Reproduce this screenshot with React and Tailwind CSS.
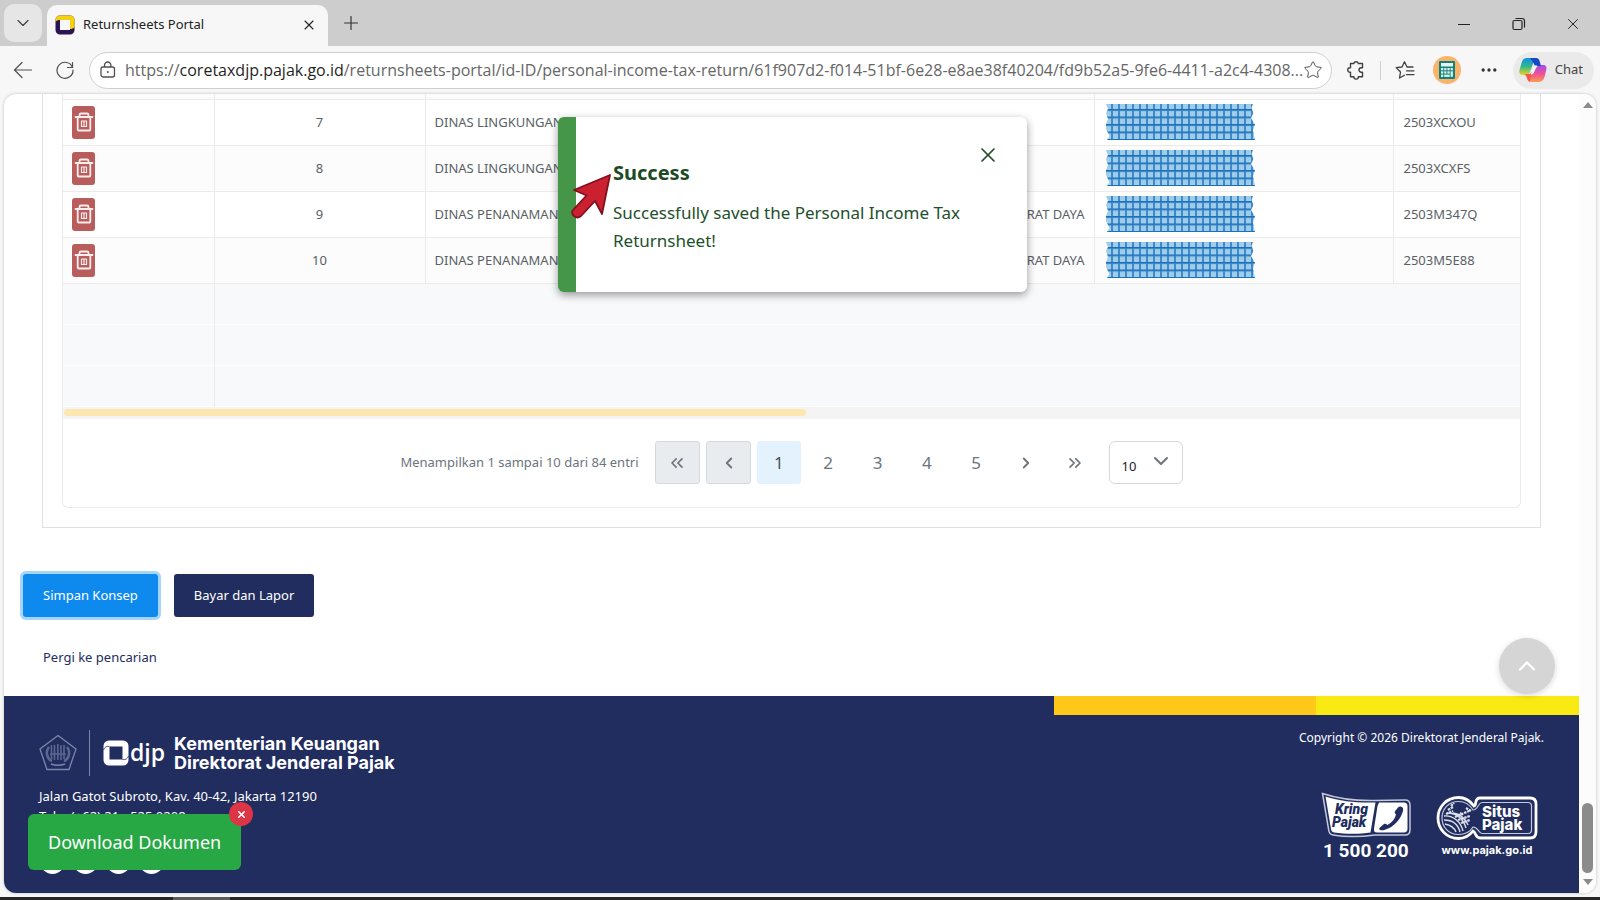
import React from 'react';
import { ChevronDown, ChevronLeft, ChevronRight, ChevronsLeft, ChevronsRight, ChevronUp, Ellipsis, Plus, Star, X } from 'lucide-react';

const ROWS = [
  { no: 7, name: 'DINAS LINGKUNGAN', region: '', doc: '2503XCXOU' },
  { no: 8, name: 'DINAS LINGKUNGAN', region: '', doc: '2503XCXFS' },
  { no: 9, name: 'DINAS PENANAMAN', region: 'BARAT DAYA', doc: '2503M347Q' },
  { no: 10, name: 'DINAS PENANAMAN', region: 'BARAT DAYA', doc: '2503M5E88' },
];

const EMPTY_ROWS = [1, 2, 3];

const PAGES = [2, 3, 4, 5];

const SOCIALS = ['Facebook', 'Instagram', 'Twitter', 'YouTube'];

function PortalIcon() {
  return (
    <svg width="20" height="20" viewBox="0 0 20 20" className="shrink-0">
      <path d="M5 .5h10A4.500 4.500 0 0 1 19.500 5v10a4.500 4.500 0 0 1-4.500 4.500H5A4.500 4.500 0 0 1 .5 15V5A4.500 4.500 0 0 1 5 .5zM5 5v10h10V5z" fill="#2a1452" fillRule="evenodd" />
      <path d="M.5 7V5A4.500 4.500 0 0 1 5 .5h10A4.500 4.500 0 0 1 19.500 5v7c-1 1.500-2.500 2-4.500 2V5H5C3 5 1.500 5.500.5 7z" fill="#f6d112" />
    </svg>
  );
}

function LockIcon() {
  return (
    <svg width="18" height="18" viewBox="0 0 18 18" fill="none" stroke="#505050" strokeWidth="1.3" className="shrink-0">
      <rect x="2" y="6" width="13.5" height="10" rx="2" />
      <path d="M5.5 6V4.2a3.2 3.2 0 0 1 6.4 0V6" />
      <circle cx="8.8" cy="11" r="1" fill="#505050" stroke="none" />
    </svg>
  );
}

function ReloadIcon() {
  return (
    <svg width="20" height="20" viewBox="0 0 20 20" fill="none" stroke="#505050" strokeWidth="1.2" strokeLinecap="round">
      <path d="M17.500 7.500A8 8 0 1 0 18 10" />
      <path d="M17.500 2.500v5h-5" />
    </svg>
  );
}

function BackIcon() {
  return (
    <svg width="20" height="20" viewBox="0 0 20 20" fill="none" stroke="#505050" strokeWidth="1.2" strokeLinecap="round">
      <path d="M1.5 10h17M9 2.5 1.5 10 9 17.5" />
    </svg>
  );
}

function PuzzleIcon() {
  return (
    <svg width="20" height="20" viewBox="0 0 20 20" fill="none" stroke="#404040" strokeWidth="1.4" strokeLinejoin="round">
      <path d="M4.500 3.500h3.300a2.300 2.300 0 0 1 4.500 0h4.200v4.300h-1.300a2.200 2.200 0 0 0 0 4.400h1.300v4.600h-4.100a2.300 2.300 0 0 1-4.600 0H4.500v-4.500H4a2.300 2.300 0 0 1 0-4.600h.5z" />
    </svg>
  );
}

function FavoritesIcon() {
  return (
    <svg width="20" height="20" viewBox="0 0 20 20" fill="none" stroke="#404040" strokeWidth="1.3" strokeLinecap="round" strokeLinejoin="round">
      <path d="M18 7h-6L9.5 1.8 7 7 1.2 7.6 5.5 12l-1 6L9.5 15.2" />
      <path d="M11.5 10.8H19M11.5 14.6H19" />
    </svg>
  );
}

function CopilotIcon() {
  return (
    <svg width="28" height="26" viewBox="0 0 28 26">
      <defs>
        <linearGradient id="cpLeft" x1="0" y1="0" x2="0" y2="1">
          <stop offset="0" stopColor="#1390e8" />
          <stop offset="0.5" stopColor="#2fb98c" />
          <stop offset="1" stopColor="#f3d21b" />
        </linearGradient>
        <linearGradient id="cpRight" x1="0" y1="0" x2="0" y2="1">
          <stop offset="0" stopColor="#9a4ff0" />
          <stop offset="0.5" stopColor="#ee4f9b" />
          <stop offset="1" stopColor="#fd9b4f" />
        </linearGradient>
      </defs>
      <path d="M20 8h4c3 0 4 2 3.200 5l-1.700 7c-1 3.500-3 5-6 5h-6c-4 0-5-2-6-5z" fill="url(#cpRight)" />
      <path d="M8 1h8l-5 14c-1 2.500-2 3-4 3H4c-3 0-4.500-2-3.500-5l2-7c1-3.500 2.500-5 5.500-5z" fill="url(#cpLeft)" />
      <path d="M11 1h6c2 0 3 1 3.600 3L22 9h-4c-2 0-3-1-3.500-3z" fill="#1747c2" />
      <path d="M7 17h6l-2.500 8C8.500 24 8.300 17.500 5 18z" fill="#f2584a" />
      <path d="M14.500 10c1-1.500 2-1.500 3.500-1.500l-3 7c-.6 1.500-1.500 2-3.500 2z" fill="#f4f4f4" />
    </svg>
  );
}

function CalculatorIcon() {
  return (
    <svg width="28" height="28" viewBox="0 0 28 28">
      <circle cx="14" cy="14" r="14" fill="#fbb36c" />
      <rect x="6" y="5" width="16" height="18" rx="1" fill="#12837a" />
      <rect x="8" y="7" width="12" height="3.500" fill="#e8f4f2" />
      <g fill="#d9f0ec">
        <rect x="8" y="12" width="2.300" height="2.300" />
        <rect x="11.200" y="12" width="2.300" height="2.300" />
        <rect x="14.400" y="12" width="2.300" height="2.300" />
        <rect x="17.600" y="12" width="2.300" height="2.300" />
        <rect x="8" y="15.300" width="2.300" height="2.300" />
        <rect x="11.200" y="15.300" width="2.300" height="2.300" />
        <rect x="14.400" y="15.300" width="2.300" height="2.300" />
        <rect x="17.600" y="15.300" width="2.300" height="5.500" />
        <rect x="8" y="18.600" width="2.300" height="2.300" />
        <rect x="11.200" y="18.600" width="5.500" height="2.300" />
      </g>
    </svg>
  );
}

function TrashIcon() {
  return (
    <svg width="20" height="20" viewBox="0 0 20 20" fill="none" stroke="#fbeeee" strokeWidth="1.800" strokeLinecap="round" strokeLinejoin="round">
      <path d="M1.500 5h17M3.700 5v12.500a1 1 0 0 0 1 1h10.600a1 1 0 0 0 1-1V5M5.500 5V3A1.500 1.500 0 0 1 7 1.500h6A1.500 1.500 0 0 1 14.500 3v2" />
      <path d="M7.500 9v5.500h5V9zM10 9v5.500" strokeWidth="1.200" />
    </svg>
  );
}

// Strip of patterned tape that hides the tax number
function Tape({ id }) {
  return (
    <svg width="150" height="36" viewBox="0 0 150 36" className="block">
      <defs>
        <pattern id={id} width="7" height="7.500" patternUnits="userSpaceOnUse" x="6" y="5">
          <rect width="7" height="7.500" fill="#9dcde9" />
          <rect width="2" height="7.500" fill="#3f8aca" />
          <rect width="7" height="2" fill="#3a86c8" />
          <rect y="0" width="7" height="1" fill="#1c6dba" />
        </pattern>
      </defs>
      <path
        d="M1 0h147l-1.500 4 2 5-2.500 5 4 6.500-2 6L150 36H2l2.500-4L1 25l0-5 2-5L1 9l2-4z"
        fill={`url(#${id})`}
      />
    </svg>
  );
}

function EmblemLogo() {
  return (
    <svg width="38" height="37" viewBox="0 0 38 37" fill="none" stroke="#7d86aa" strokeWidth="1.300">
      <path d="M19 1.500 37 15l-7 20.500H8L1 15z" />
      <path d="M10 13c-4 5-2 12 3 14M28 13c4 5 2 12-3 14" strokeWidth="2.500" stroke="#5c668f" />
      <path d="M12.500 11v14M15.500 11v15M18.800 10v16M22 11v15M25 11v14M11 20h16" strokeWidth="1.600" stroke="#5c668f" />
      <path d="M12 30c4 1.500 10 1.500 14 0" strokeWidth="1.500" />
    </svg>
  );
}

function DjpMark() {
  return (
    <svg width="26" height="26" viewBox="0 0 26 26">
      <path
        d="M6 .5h14A5.500 5.500 0 0 1 25.500 6v14a5.500 5.500 0 0 1-5.500 5.500H6A5.500 5.500 0 0 1 .5 20V6A5.500 5.500 0 0 1 6 .5zM6.500 6.500v13h13v-13z"
        fill="#fff"
        fillRule="evenodd"
      />
      <path d="M.5 10c1-3 3-4 6-3.500M25.500 16c-1 3-3 4-6 3.500" fill="none" stroke="#212d5e" strokeWidth="0.800" />
    </svg>
  );
}

function KringPajakLogo() {
  return (
    <svg width="92" height="72" viewBox="0 0 92 72">
      <path d="M1.500 1.500C18 7 34 9 54 8.500l30-.5c3 0 5 2 5 5v25c0 3-2 5-5 5H54c-15 2-30 2-42 0-3-.5-4-2-4.300-5z" fill="#212d5e" stroke="#c3c8da" strokeWidth="1.500" />
      <path d="M4.500 4.500C20 9.500 36 11 54.500 10.500l-5 30c-12 2-26 1.500-36.500 0-2-.4-2.700-1.500-3-3.500z" fill="#fff" />
      <path d="M58 10.500h25c2.200 0 3.500 1.300 3.500 3.500v23c0 2.200-1.300 3.500-3.500 3.500H56c-2.500 0-3.500-1.500-3-4l3.500-22.500z" fill="#fff" />
      <path d="M58.500 37.500c-.8-1 .5-2 1.500-3l3-2.500c1-.6 2-.3 3.500 1 5-3 7.500-6.500 8.500-10.500-1.500-1.500-1.500-2.500-.8-3.500l2.800-3.500c1-1 2.500-1.500 4-.5 1 .8 1.500 2 1 4-2.500 8.500-9 16-18 18.800-2.500.8-4.500.8-5.500-.3z" fill="#212d5e" />
      <text x="14" y="22" fill="#212d5e" fontSize="14" fontWeight="900" fontStyle="italic" fontFamily="Roboto, sans-serif">Kring</text>
      <text x="11" y="35" fill="#212d5e" fontSize="14" fontWeight="900" fontStyle="italic" fontFamily="Roboto, sans-serif">Pajak</text>
      <text x="2" y="65" fill="#fff" fontSize="19" fontWeight="700" fontFamily="Roboto, sans-serif">1 500 200</text>
    </svg>
  );
}

function SitusPajakLogo() {
  return (
    <svg width="102" height="62" viewBox="0 0 102 62" fill="none">
      <path
        d="M38 10C41 9 38 2 44 2h50c4 0 6 2 6 6v28c0 4-2 6-6 6H44c-5 0-4-6-7-7-3 4-8 7.500-14.500 7.500C10.500 42.500 2 33 2 22S10.500 1.500 22.500 1.500C30 1.500 35 6 38 10z"
        stroke="#fff"
        strokeWidth="2.800"
      />
      <path
        d="M37 14c5 0 5-7.500 9-7.500h46c2.500 0 3.500 1 3.500 3.500v24c0 2.500-1 3.500-3.500 3.500H46c-3 0-4-6.500-9-6.500-3 5-8 7.500-14.500 7.500C12.500 38.500 6 31 6 22S12.500 5.500 22.500 5.500C29 5.500 34 9 37 14z"
        stroke="#c3c8da"
        strokeWidth="1.200"
      />
      <path d="M8 20c9-1 17 6 19 15M8 24c8 0 14 4 16 12M9 28c5 1 9 3 11 8M11 17c9 0 16 5 19 15M17 17c7 1 12 5 15 12" stroke="#dde1ee" strokeWidth="1.400" />
      <path d="M19 21l14-6M22 24l12-4M25 27l9-3M12 14l5-3M10 18l7-3M15 10l3-3M24 17l3 2M30 12l5 3" stroke="#dde1ee" strokeWidth="2.200" strokeDasharray="2.500 0.800" />
      <text x="46" y="21" fill="#fff" fontSize="15" fontWeight="800" fontFamily="Inter, sans-serif">Situs</text>
      <text x="46" y="34" fill="#fff" fontSize="15" fontWeight="800" fontFamily="Inter, sans-serif">Pajak</text>
      <text x="51" y="58" fill="#fff" fontSize="11" fontWeight="700" textAnchor="middle" fontFamily="Inter, sans-serif">www.pajak.go.id</text>
    </svg>
  );
}

function BrowserHeader() {
  return (
    <header>
      <div className="flex h-[46px] items-end bg-[#cdcdcd] pl-1">
        <button aria-label="Tab actions" className="mb-1 flex h-[38px] w-[38px] items-center justify-center rounded-[10px] bg-[#e6e6e6]">
          <ChevronDown size={20} strokeWidth={1.4} className="text-[#404040]" />
        </button>
        <div className="ml-[5px] flex h-[41px] w-[281px] items-center rounded-t-[10px] bg-[#f7f7f7] pr-[11px] pb-[2px] pl-2">
          <PortalIcon />
          <span className="ml-2 flex-1 text-[13px] text-[#222]">Returnsheets Portal</span>
          <button aria-label="Close tab">
            <X size={16} strokeWidth={1.6} className="text-[#222]" />
          </button>
        </div>
        <button aria-label="New tab" className="mb-3 ml-3">
          <Plus size={22} strokeWidth={1.3} className="text-[#333]" />
        </button>
        <div className="mb-[13px] ml-auto flex items-center gap-[38px] pr-[18px]">
          <button aria-label="Minimize" className="flex h-4 w-4 items-center">
            <span className="h-px w-3 bg-[#222]" />
          </button>
          <button aria-label="Restore">
            <svg width="14" height="14" viewBox="0 0 14 14" fill="none" stroke="#222" strokeWidth="1.200">
              <rect x="1" y="3.500" width="9" height="9" rx="1.500" />
              <path d="M3.500 1.500h6.500a2.500 2.500 0 0 1 2.500 2.500v6.500" />
            </svg>
          </button>
          <button aria-label="Close">
            <X size={18} strokeWidth={1.3} className="text-[#222]" />
          </button>
        </div>
      </div>

      <div className="flex h-12 items-center bg-[#f7f7f7] pr-[6px] pl-[13px]">
        <button aria-label="Back"><BackIcon /></button>
        <button aria-label="Reload" className="ml-[22px]"><ReloadIcon /></button>
        <div className="ml-[14px] flex h-[37px] min-w-0 flex-1 items-center rounded-full border border-[#cfcfcf] bg-white pr-2 pl-[9px]">
          <LockIcon />
          <span className="ml-2 min-w-0 flex-1 font-['Open_Sans'] text-[16px] whitespace-nowrap text-[#666]">
            https://<span className="text-[#1f1f1f]">coretaxdjp.pajak.go.id</span>
            /returnsheets-portal/id-ID/personal-income-tax-return/61f907d2-f014-51bf-6e28-e8ae38f40204/fd9b52a5-9fe6-4411-a2c4-4308...
          </span>
          <button aria-label="Add to favorites">
            <Star size={20} strokeWidth={1.2} className="text-[#555]" />
          </button>
        </div>
        <button aria-label="Extensions" className="ml-[14px]"><PuzzleIcon /></button>
        <span className="mx-[14px] h-[19px] w-px bg-[#cfcfcf]" />
        <button aria-label="Favorites"><FavoritesIcon /></button>
        <button aria-label="Calculator" className="ml-[18px]"><CalculatorIcon /></button>
        <button aria-label="Settings and more" className="ml-[18px]">
          <Ellipsis size={20} className="text-[#333]" />
        </button>
        <button className="ml-[14px] flex h-[37px] items-center gap-2 rounded-full bg-[#eaeaea] pr-[11px] pl-[6px] text-[13px] text-[#444]">
          <CopilotIcon />
          Chat
        </button>
      </div>
    </header>
  );
}

function ReturnTable() {
  return (
    <table className="w-full table-fixed border-collapse text-[13px] text-[#5a5f66]">
      <colgroup>
        <col className="w-[151px]" />
        <col className="w-[211px]" />
        <col />
        <col className="w-[299px]" />
        <col className="w-[127px]" />
      </colgroup>
      <tbody>
        <tr className="h-[5px] border-b border-[#ebebeb] bg-[#fcfcfc]">
          <td className="border-r border-[#ebebeb] p-0" />
          <td className="border-r border-[#ebebeb] p-0" />
          <td className="border-r border-[#ebebeb] p-0" />
          <td className="border-r border-[#ebebeb] p-0" />
          <td className="p-0" />
        </tr>
        {ROWS.map((row) => (
          <tr key={row.no} className="h-[46px] border-b border-[#ebebeb] even:bg-white odd:bg-[#fcfcfc]">
            <td className="border-r border-[#ebebeb] py-0 pl-[9px]">
              <button aria-label={`Hapus ${row.no}`} className="flex h-[33px] w-[23px] items-center justify-center rounded-[3px] bg-[#b95c5c]">
                <TrashIcon />
              </button>
            </td>
            <td className="border-r border-[#ebebeb] pt-[2px] pb-0 text-center">{row.no}</td>
            <td className="border-r border-[#ebebeb] px-[9px] pt-[2px] pb-0">
              <div className="flex justify-between whitespace-nowrap">
                <span>{row.name}</span>
                <span>{row.region}</span>
              </div>
            </td>
            <td className="border-r border-[#ebebeb] py-0 pl-[10px]"><Tape id={`tape${row.no}`} /></td>
            <td className="pt-[2px] pb-0 pl-[10px]">{row.doc}</td>
          </tr>
        ))}
        {EMPTY_ROWS.map((row) => (
          <tr key={row} className="h-[41px] border-b border-white bg-[#f8f9fb]">
            <td className="border-r border-[#ebebeb] p-0" />
            <td className="p-0" colSpan={4} />
          </tr>
        ))}
      </tbody>
    </table>
  );
}

function Paginator() {
  return (
    <div className="flex h-[88px] items-center justify-center text-[#6c757d]">
      <span className="text-[13px]">Menampilkan 1 sampai 10 dari 84 entri</span>
      <div className="ml-4 flex w-[442px] gap-[6px] text-[17px]">
        <button aria-label="First page" className="flex h-[43px] flex-1 items-center justify-center rounded-[3px] border border-[#d5d9dd] bg-[#e9ecef]">
          <ChevronsLeft size={20} />
        </button>
        <button aria-label="Previous page" className="flex h-[43px] flex-1 items-center justify-center rounded-[3px] border border-[#d5d9dd] bg-[#e9ecef]">
          <ChevronLeft size={18} strokeWidth={2.5} />
        </button>
        <button className="h-[43px] flex-1 rounded-[3px] bg-[#e3f2fd] text-[#495057]">1</button>
        {PAGES.map((page) => (
          <button key={page} className="h-[43px] flex-1">{page}</button>
        ))}
        <button aria-label="Next page" className="flex h-[43px] flex-1 items-center justify-center">
          <ChevronRight size={18} strokeWidth={2.5} />
        </button>
        <button aria-label="Last page" className="flex h-[43px] flex-1 items-center justify-center">
          <ChevronsRight size={20} />
        </button>
      </div>
      <div className="relative ml-3">
        <select aria-label="Rows per page" defaultValue="10" className="h-[43px] w-[74px] appearance-none rounded-[6px] border border-[#d5d9de] bg-white pt-2 pl-3 text-[13px] text-[#222]">
          <option>10</option>
        </select>
        <ChevronDown size={24} strokeWidth={2} className="pointer-events-none absolute top-2 right-[10px]" />
      </div>
    </div>
  );
}

function SuccessDialog() {
  return (
    <div role="alertdialog" aria-labelledby="dialog-title" className="absolute top-[23px] left-[554px] flex w-[469px] rounded-[6px] border-l-[18px] border-[#459648] bg-white pt-[38px] pr-[30px] pb-[37px] pl-[37px] text-[#22502c] shadow-[0_3px_8px_rgba(0,0,0,0.4)]">
      <div className="flex-1">
        <h2 id="dialog-title" className="text-[20px] leading-[36px] font-bold text-[#1b4a25]">Success</h2>
        <p className="mt-[8px] w-[370px] text-[17px] leading-[28px]">
          Successfully saved the Personal Income Tax Returnsheet!
        </p>
      </div>
      <button aria-label="Close message" className="absolute top-[26px] right-[27px]">
        <X size={24} strokeWidth={1.7} />
      </button>
      <svg width="42" height="46" viewBox="0 0 42 46" className="absolute top-[56px] -left-[5px]">
        <path
          d="M39 2 3 17l12.500 5.500L2 37c-3 4 3 10 8 6l14-15 7 13z"
          fill="#cb202f"
          stroke="#80121f"
          strokeWidth="1.800"
          strokeLinejoin="round"
        />
      </svg>
    </div>
  );
}

function Footer() {
  return (
    <footer className="bg-[#212d5e] text-white">
      <div className="flex h-[19px]">
        <div className="w-2/3" />
        <div className="w-1/6 bg-[#ffc91b]" />
        <div className="w-1/6 bg-[#faea14]" />
      </div>
      <div className="flex justify-between px-[35px] pb-[19px]">
        <div className="pt-[15px]">
          <div className="flex items-center">
            <EmblemLogo />
            <span className="ml-3 h-[46px] w-px bg-[#7d86aa]" />
            <div className="ml-[13px] flex items-center">
              <DjpMark />
              <span className="ml-px pb-[2px] font-['Open_Sans'] text-[23px] leading-[26px] font-semibold">djp</span>
            </div>
            <div className="ml-[9px] font-['Inter'] text-[18px] leading-[19px] font-bold">
              Kementerian Keuangan
              <br />
              Direktorat Jenderal Pajak
            </div>
          </div>
          <p className="mt-[10px] text-[13px] leading-[20px]">Jalan Gatot Subroto, Kav. 40-42, Jakarta 12190</p>
          <p className="text-[13px] leading-[20px]">Telp: (+62) 21 - 525 0208</p>
          <div className="mt-[23px] flex gap-2 pl-[1px]">
            {SOCIALS.map((name) => (
              <a key={name} href="#" aria-label={name} className="h-[25px] w-[25px] rounded-full bg-white" />
            ))}
          </div>
        </div>
        <div className="flex flex-col items-end pt-3">
          <p className="text-[12px] leading-[22px]">Copyright © 2026 Direktorat Jenderal Pajak.</p>
          <div className="mt-[43px] flex items-start gap-[23px] pr-[6px]">
            <KringPajakLogo />
            <div className="pt-1"><SitusPajakLogo /></div>
          </div>
        </div>
      </div>
    </footer>
  );
}

export default function App() {
  return (
    <div className="flex min-h-screen flex-col bg-[#f7f7f7] font-['Noto_Sans','Open_Sans',sans-serif]">
      <BrowserHeader />

      <div className="relative mx-1 mb-1 flex flex-1 overflow-hidden rounded-xl bg-white shadow-[0_0_3px_rgba(0,0,0,0.25)]">
        <main className="flex min-w-0 flex-1 flex-col">
          <section className="mx-[38px] border-x border-b border-[#dee2e6] px-[19px] pb-[19px]">
            <div className="rounded-b-[6px] border-x border-b border-[#ebebeb]">
              <ReturnTable />
              <div className="flex h-3 items-center bg-[#f4f4f4] px-px">
                <div className="h-[7px] w-[51%] rounded-full bg-[#fce7b1]" />
              </div>
              <Paginator />
            </div>
          </section>

          <div className="mt-[46px] flex gap-4 pl-[19px] text-[13px] text-white">
            <button className="h-[43px] rounded-[3px] bg-[#0e8aee] px-5 pt-[2px] shadow-[0_0_0_3px_#a6d5fa]">Simpan Konsep</button>
            <button className="h-[43px] rounded-[3px] bg-[#212d5e] px-5 pt-[2px]">Bayar dan Lapor</button>
          </div>
          <a href="#" className="mt-[29px] mb-7 pl-[39px] text-[13px] leading-[22px] text-[#212d5e]">Pergi ke pencarian</a>

          <Footer />
        </main>

        <div className="flex w-[17px] flex-col items-center bg-[#fcfcfc] py-2">
          <svg width="10" height="6" viewBox="0 0 10 6"><path d="M5 0l5 6H0z" fill="#8b8b8b" /></svg>
          <div className="mt-auto mb-[6px] h-[70px] w-[11px] rounded-full bg-[#8b8b8b]" />
          <svg width="10" height="6" viewBox="0 0 10 6"><path d="M5 6l5-6H0z" fill="#8b8b8b" /></svg>
        </div>

        <SuccessDialog />

        <button aria-label="Scroll to top" className="absolute right-[41px] bottom-[199px] flex h-14 w-14 items-center justify-center rounded-full bg-[#d5d5d5] shadow-[0_2px_6px_rgba(0,0,0,0.15)]">
          <ChevronUp size={28} className="text-white" />
        </button>

        <div className="absolute bottom-[23px] left-6">
          <button className="h-14 rounded-[6px] bg-[#28a745] px-5 text-[18px] text-white">Download Dokumen</button>
          <button aria-label="Close download" className="absolute -top-3 -right-3 flex h-6 w-6 items-center justify-center rounded-full bg-[#dc3545]">
            <X size={11} strokeWidth={3.5} className="text-white" />
          </button>
        </div>
      </div>

      <div className="flex h-[3px] bg-[#262626]">
        <div className="ml-[173px] w-[57px] bg-[#5c5c5c]" />
      </div>
    </div>
  );
}
